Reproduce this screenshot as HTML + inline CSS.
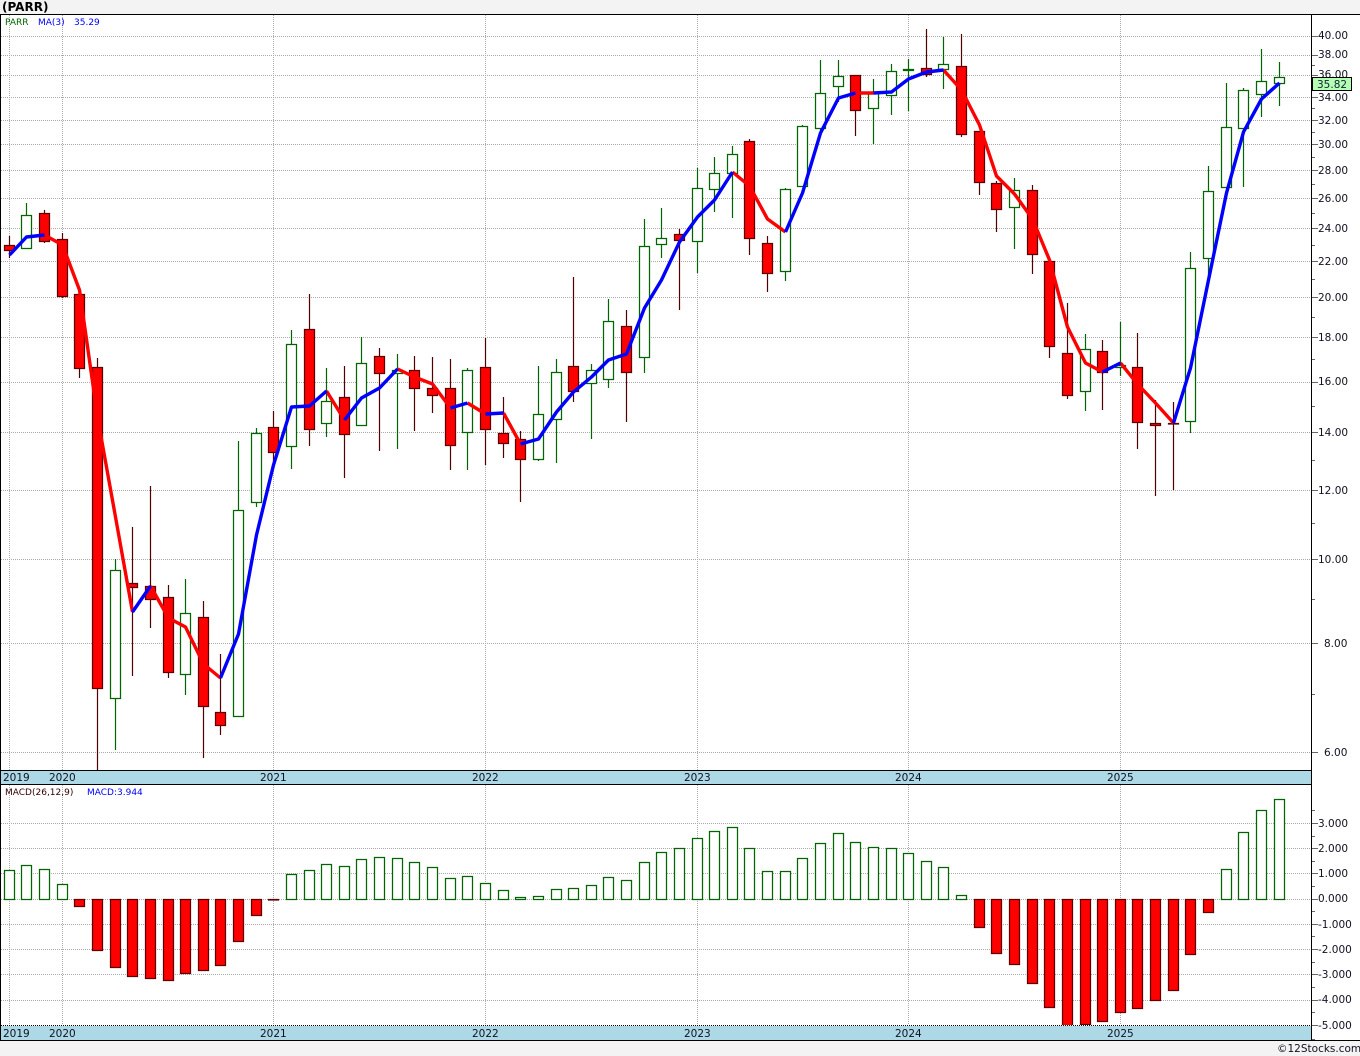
<!DOCTYPE html>
<html lang="en"><head><meta charset="utf-8"><title>PARR</title>
<style>
html,body{margin:0;padding:0;background:#f3f3f3;width:1360px;height:1056px;overflow:hidden}
svg{display:block}
text{font-family:"DejaVu Sans","Liberation Sans",sans-serif;font-size:10.5px;fill:#111122}
.g{fill:#fff;stroke:#006400;stroke-width:1.25}
.r{fill:#f00;stroke:#5f0000;stroke-width:1.25}
.c{shape-rendering:crispEdges}
</style></head><body>
<svg width="1360" height="1056" viewBox="0 0 1360 1056" xmlns="http://www.w3.org/2000/svg">
<defs>
<clipPath id="p1"><rect x="1" y="15" width="1310" height="755"/></clipPath>
<clipPath id="p2"><rect x="1" y="785" width="1310" height="240"/></clipPath>
</defs>
<rect x="0" y="0" width="1360" height="1056" fill="#f3f3f3"/>
<rect x="0" y="15" width="1360" height="1025" fill="#fff"/>

<!-- grid -->
<g class="c" fill="none" stroke="#aaa" stroke-width="1" stroke-dasharray="1 1">
<path d="M1 36.5H1311M1 55.5H1311M1 75.5H1311M1 97.5H1311M1 120.5H1311M1 144.5H1311M1 170.5H1311M1 198.5H1311M1 228.5H1311M1 261.5H1311M1 297.5H1311M1 337.5H1311M1 382.5H1311M1 432.5H1311M1 490.5H1311M1 559.5H1311M1 643.5H1311M1 752.5H1311"/>
<path d="M9.5 15V770M62.5 15V770M273.5 15V770M485.5 15V770M697.5 15V770M908.5 15V770M1120.5 15V770"/>
<path d="M1 823.5H1311M1 848.5H1311M1 873.5H1311M1 899.5H1311M1 924.5H1311M1 949.5H1311M1 974.5H1311M1 1000.5H1311"/>
<path d="M9.5 785V1025M62.5 785V1025M273.5 785V1025M485.5 785V1025M697.5 785V1025M908.5 785V1025M1120.5 785V1025"/>
</g>

<!-- candles -->
<g clip-path="url(#p1)">
<path fill="none" stroke="#006400" stroke-width="1.2" d="M26.5 203V248M115.5 559V750M185.5 579V695M238.5 441V716M256.5 428V507M291.5 330V469M326.5 368V437M361.5 337V425M397.5 354V449M467.5 368V470M538.5 366V461M556.5 359V463M591.5 364V439M608.5 299V388M644.5 219V373M661.5 208V258M697.5 168V273M714.5 157V212M732.5 146V218M785.5 188V281M802.5 125V186M820.5 60V132M838.5 60V102M873.5 79V144M891.5 64V115M908.5 59V111M943.5 37V89M1014.5 178V249M1085.5 334V411M1120.5 322V376M1190.5 252V433M1208.5 166V277M1226.5 83V187M1243.5 88V187M1261.5 49V117M1279.5 62V106"/>
<path fill="none" stroke="#500000" stroke-width="1.2" d="M9.5 236V258M44.5 210V243M62.5 233V298M79.5 291V378M97.5 358V770M132.5 527V676M150.5 486V628M168.5 585V678M203.5 601V758M220.5 654V735M273.5 411V465M309.5 294V446M344.5 366V478M379.5 348V451M414.5 356V431M432.5 357V413M450.5 359V470M485.5 338V465M503.5 397V458M520.5 431V502M573.5 277V402M626.5 310V422M679.5 229V310M749.5 139V255M767.5 236V292M855.5 75V136M926.5 29V77M961.5 34V137M979.5 131V195M996.5 181V232M1032.5 185V274M1049.5 261V358M1067.5 303V399M1102.5 340V410M1137.5 333V449M1155.5 400V496M1173.5 402V490"/>

<rect class="r" x="4.5" y="245.5" width="10" height="5"/>
<rect class="g" x="21.5" y="215.5" width="10" height="33"/>
<rect class="r" x="39.5" y="213.5" width="10" height="28"/>
<rect class="r" x="57.5" y="239.5" width="10" height="57"/>
<rect class="r" x="74.5" y="294.5" width="10" height="74"/>
<rect class="r" x="92.5" y="367.5" width="10" height="321"/>
<rect class="g" x="110.5" y="570.5" width="10" height="128"/>
<rect class="r" x="127.5" y="583.5" width="10" height="4"/>
<rect class="r" x="145.5" y="586.5" width="10" height="13"/>
<rect class="r" x="163.5" y="597.5" width="10" height="75"/>
<rect class="g" x="180.5" y="613.5" width="10" height="61"/>
<rect class="r" x="198.5" y="617.5" width="10" height="89"/>
<rect class="r" x="215.5" y="712.5" width="10" height="13"/>
<rect class="g" x="233.5" y="510.5" width="10" height="206"/>
<rect class="g" x="251.5" y="433.5" width="10" height="69"/>
<rect class="r" x="268.5" y="427.5" width="10" height="25"/>
<rect class="g" x="286.5" y="344.5" width="10" height="102"/>
<rect class="r" x="304.5" y="329.5" width="10" height="100"/>
<rect class="g" x="321.5" y="401.5" width="10" height="22"/>
<rect class="r" x="339.5" y="397.5" width="10" height="37"/>
<rect class="g" x="356.5" y="363.5" width="10" height="62"/>
<rect class="r" x="374.5" y="356.5" width="10" height="17"/>
<rect class="g" x="392.5" y="370.5" width="10" height="3"/>
<rect class="r" x="409.5" y="370.5" width="10" height="18"/>
<rect class="r" x="427.5" y="388.5" width="10" height="7"/>
<rect class="r" x="445.5" y="388.5" width="10" height="57"/>
<rect class="g" x="462.5" y="370.5" width="10" height="62"/>
<rect class="r" x="480.5" y="367.5" width="10" height="62"/>
<rect class="r" x="498.5" y="433.5" width="10" height="10"/>
<rect class="r" x="515.5" y="439.5" width="10" height="20"/>
<rect class="g" x="533.5" y="414.5" width="10" height="45"/>
<rect class="g" x="551.5" y="372.5" width="10" height="47"/>
<rect class="r" x="568.5" y="366.5" width="10" height="25"/>
<rect class="g" x="586.5" y="370.5" width="10" height="13"/>
<rect class="g" x="603.5" y="321.5" width="10" height="58"/>
<rect class="r" x="621.5" y="326.5" width="10" height="46"/>
<rect class="g" x="639.5" y="246.5" width="10" height="111"/>
<rect class="g" x="656.5" y="238.5" width="10" height="6"/>
<rect class="r" x="674.5" y="234.5" width="10" height="6"/>
<rect class="g" x="692.5" y="188.5" width="10" height="53"/>
<rect class="g" x="709.5" y="173.5" width="10" height="16"/>
<rect class="g" x="727.5" y="154.5" width="10" height="19"/>
<rect class="r" x="744.5" y="141.5" width="10" height="97"/>
<rect class="r" x="762.5" y="243.5" width="10" height="30"/>
<rect class="g" x="780.5" y="189.5" width="10" height="82"/>
<rect class="g" x="797.5" y="126.5" width="10" height="60"/>
<rect class="g" x="815.5" y="93.5" width="10" height="35"/>
<rect class="g" x="833.5" y="76.5" width="10" height="10"/>
<rect class="r" x="850.5" y="75.5" width="10" height="35"/>
<rect class="g" x="868.5" y="93.5" width="10" height="15"/>
<rect class="g" x="886.5" y="71.5" width="10" height="24"/>
<rect class="g" x="903.5" y="69.5" width="10" height="1"/>
<rect class="r" x="921.5" y="68.5" width="10" height="6"/>
<rect class="g" x="938.5" y="64.5" width="10" height="5"/>
<rect class="r" x="956.5" y="66.5" width="10" height="68"/>
<rect class="r" x="974.5" y="131.5" width="10" height="51"/>
<rect class="r" x="991.5" y="183.5" width="10" height="26"/>
<rect class="g" x="1009.5" y="190.5" width="10" height="17"/>
<rect class="r" x="1027.5" y="190.5" width="10" height="64"/>
<rect class="r" x="1044.5" y="261.5" width="10" height="85"/>
<rect class="r" x="1062.5" y="353.5" width="10" height="42"/>
<rect class="g" x="1080.5" y="349.5" width="10" height="42"/>
<rect class="r" x="1097.5" y="351.5" width="10" height="21"/>
<rect class="g" x="1115.5" y="365.5" width="10" height="2"/>
<rect class="r" x="1132.5" y="367.5" width="10" height="55"/>
<rect class="r" x="1150.5" y="423.5" width="10" height="2"/>
<rect class="r" x="1168.5" y="423.5" width="10" height="0.5"/>
<rect class="g" x="1185.5" y="268.5" width="10" height="153"/>
<rect class="g" x="1203.5" y="191.5" width="10" height="67"/>
<rect class="g" x="1221.5" y="127.5" width="10" height="60"/>
<rect class="g" x="1238.5" y="90.5" width="10" height="38"/>
<rect class="g" x="1256.5" y="81.5" width="10" height="13"/>
<rect class="g" x="1274.5" y="77.5" width="10" height="6"/>
</g>

<!-- MA(3) -->
<g fill="none" stroke-width="3.4" stroke-linejoin="round" clip-path="url(#p1)">
<path stroke="#f00" d="M44.5 235L62.5 245L79.5 290L97.5 417L115.5 517L132.5 612M150.5 586L168.5 618L185.5 627L203.5 664L220.5 678M326.5 391L344.5 420M397.5 369L414.5 377L432.5 384L450.5 408M467.5 403L485.5 414M503.5 413L520.5 444M732.5 172L749.5 186L767.5 219L785.5 232M855.5 93L873.5 93M943.5 70L961.5 90L979.5 125L996.5 176L1014.5 194L1032.5 219L1049.5 260L1067.5 327L1085.5 363L1102.5 372M1120.5 363L1137.5 384L1155.5 403L1173.5 423"/>
<path stroke="#00f" d="M9.5 255L26.5 237L44.5 235M132.5 612L150.5 586M220.5 678L238.5 634L256.5 535L273.5 465L291.5 407L309.5 406L326.5 391M344.5 420L361.5 398L379.5 388L397.5 369M450.5 408L467.5 403M485.5 414L503.5 413M520.5 444L538.5 439L556.5 412L573.5 392L591.5 377L608.5 360L626.5 354L644.5 308L661.5 280L679.5 242L697.5 217L714.5 200L732.5 172M785.5 232L802.5 193L820.5 133L838.5 98L855.5 93M873.5 93L891.5 92L908.5 79L926.5 72L943.5 70M1102.5 372L1120.5 363M1173.5 423L1190.5 368L1208.5 280L1226.5 193L1243.5 132L1261.5 99L1279.5 83"/>
</g>

<!-- MACD bars -->
<g clip-path="url(#p2)">
<rect class="g" x="4.5" y="870.5" width="10" height="29"/>
<rect class="g" x="21.5" y="865.5" width="10" height="34"/>
<rect class="g" x="39.5" y="869.5" width="10" height="30"/>
<rect class="g" x="57.5" y="884.5" width="10" height="15"/>
<rect class="r" x="74.5" y="899.5" width="10" height="7"/>
<rect class="r" x="92.5" y="899.5" width="10" height="51"/>
<rect class="r" x="110.5" y="899.5" width="10" height="68"/>
<rect class="r" x="127.5" y="899.5" width="10" height="77"/>
<rect class="r" x="145.5" y="899.5" width="10" height="79"/>
<rect class="r" x="163.5" y="899.5" width="10" height="81"/>
<rect class="r" x="180.5" y="899.5" width="10" height="74"/>
<rect class="r" x="198.5" y="899.5" width="10" height="71"/>
<rect class="r" x="215.5" y="899.5" width="10" height="66"/>
<rect class="r" x="233.5" y="899.5" width="10" height="42"/>
<rect class="r" x="251.5" y="899.5" width="10" height="16"/>
<rect class="r" x="268.5" y="899.5" width="10" height="0.5"/>
<rect class="g" x="286.5" y="874.5" width="10" height="25"/>
<rect class="g" x="304.5" y="870.5" width="10" height="29"/>
<rect class="g" x="321.5" y="864.5" width="10" height="35"/>
<rect class="g" x="339.5" y="866.5" width="10" height="33"/>
<rect class="g" x="356.5" y="859.5" width="10" height="40"/>
<rect class="g" x="374.5" y="857.5" width="10" height="42"/>
<rect class="g" x="392.5" y="858.5" width="10" height="41"/>
<rect class="g" x="409.5" y="862.5" width="10" height="37"/>
<rect class="g" x="427.5" y="867.5" width="10" height="32"/>
<rect class="g" x="445.5" y="878.5" width="10" height="21"/>
<rect class="g" x="462.5" y="876.5" width="10" height="23"/>
<rect class="g" x="480.5" y="883.5" width="10" height="16"/>
<rect class="g" x="498.5" y="890.5" width="10" height="9"/>
<rect class="g" x="515.5" y="897.5" width="10" height="2"/>
<rect class="g" x="533.5" y="896.5" width="10" height="3"/>
<rect class="g" x="551.5" y="889.5" width="10" height="10"/>
<rect class="g" x="568.5" y="888.5" width="10" height="11"/>
<rect class="g" x="586.5" y="885.5" width="10" height="14"/>
<rect class="g" x="603.5" y="877.5" width="10" height="22"/>
<rect class="g" x="621.5" y="880.5" width="10" height="19"/>
<rect class="g" x="639.5" y="862.5" width="10" height="37"/>
<rect class="g" x="656.5" y="852.5" width="10" height="47"/>
<rect class="g" x="674.5" y="848.5" width="10" height="51"/>
<rect class="g" x="692.5" y="838.5" width="10" height="61"/>
<rect class="g" x="709.5" y="831.5" width="10" height="68"/>
<rect class="g" x="727.5" y="827.5" width="10" height="72"/>
<rect class="g" x="744.5" y="848.5" width="10" height="51"/>
<rect class="g" x="762.5" y="871.5" width="10" height="28"/>
<rect class="g" x="780.5" y="871.5" width="10" height="28"/>
<rect class="g" x="797.5" y="858.5" width="10" height="41"/>
<rect class="g" x="815.5" y="843.5" width="10" height="56"/>
<rect class="g" x="833.5" y="833.5" width="10" height="66"/>
<rect class="g" x="850.5" y="842.5" width="10" height="57"/>
<rect class="g" x="868.5" y="847.5" width="10" height="52"/>
<rect class="g" x="886.5" y="848.5" width="10" height="51"/>
<rect class="g" x="903.5" y="853.5" width="10" height="46"/>
<rect class="g" x="921.5" y="861.5" width="10" height="38"/>
<rect class="g" x="938.5" y="867.5" width="10" height="32"/>
<rect class="g" x="956.5" y="895.5" width="10" height="4"/>
<rect class="r" x="974.5" y="899.5" width="10" height="28"/>
<rect class="r" x="991.5" y="899.5" width="10" height="54"/>
<rect class="r" x="1009.5" y="899.5" width="10" height="65"/>
<rect class="r" x="1027.5" y="899.5" width="10" height="84"/>
<rect class="r" x="1044.5" y="899.5" width="10" height="108"/>
<rect class="r" x="1062.5" y="899.5" width="10" height="130"/>
<rect class="r" x="1080.5" y="899.5" width="10" height="125"/>
<rect class="r" x="1097.5" y="899.5" width="10" height="122"/>
<rect class="r" x="1115.5" y="899.5" width="10" height="113"/>
<rect class="r" x="1132.5" y="899.5" width="10" height="109"/>
<rect class="r" x="1150.5" y="899.5" width="10" height="101"/>
<rect class="r" x="1168.5" y="899.5" width="10" height="91"/>
<rect class="r" x="1185.5" y="899.5" width="10" height="55"/>
<rect class="r" x="1203.5" y="899.5" width="10" height="13"/>
<rect class="g" x="1221.5" y="869.5" width="10" height="30"/>
<rect class="g" x="1238.5" y="832.5" width="10" height="67"/>
<rect class="g" x="1256.5" y="810.5" width="10" height="89"/>
<rect class="g" x="1274.5" y="799.5" width="10" height="100"/>
</g>

<!-- year bands -->
<rect x="1" y="771" width="1310" height="13" fill="#add8e6"/>
<rect x="1" y="1026" width="1310" height="14" fill="#add8e6"/>
<g class="c" fill="none" stroke="#000">
<path d="M0 14.5H1360M0 1040.5H1360M0.5 14V1041M1311.5 14V1041M0 770.5H1312M0 784.5H1312"/>
<path stroke-dasharray="1 1" d="M1 1025.5H1311"/>
</g>

<!-- axis ticks -->
<g class="c" fill="none" stroke="#666">
<path d="M1312 36.5h6M1312 55.5h6M1312 75.5h6M1312 97.5h6M1312 120.5h6M1312 144.5h6M1312 170.5h6M1312 198.5h6M1312 228.5h6M1312 261.5h6M1312 297.5h6M1312 337.5h6M1312 382.5h6M1312 432.5h6M1312 490.5h6M1312 559.5h6M1312 643.5h6M1312 752.5h6"/>
<path d="M1312 65.5h3M1312 108.5h3M1312 132.5h3M1312 157.5h3M1312 184.5h3M1312 213.5h3M1312 245.5h3M1312 279.5h3M1312 317.5h3M1312 359.5h3M1312 406.5h3M1312 460.5h3M1312 523.5h3M1312 599.5h3M1312 694.5h3"/>
<path d="M1312 823.5h6M1312 848.5h6M1312 873.5h6M1312 899.5h6M1312 924.5h6M1312 949.5h6M1312 974.5h6M1312 1000.5h6M1312 1025.5h6"/>
<path d="M1312 810.5h3M1312 836.5h3M1312 861.5h3M1312 886.5h3M1312 911.5h3M1312 936.5h3M1312 962.5h3M1312 987.5h3M1312 1012.5h3M1312 1039.5h3"/>
</g>

<!-- text -->
<text x="2" y="11" style="font-weight:bold;font-size:12px;fill:#000">(PARR)</text>
<text x="5" y="25" style="font-size:9px;fill:#006400">PARR</text>
<text x="38" y="25" style="font-size:9px;fill:#00f">MA(3)</text>
<text x="74" y="25" style="font-size:9px;fill:#00f">35.29</text>
<text x="5" y="795" style="font-size:9px;fill:#300">MACD(26,12,9)</text>
<text x="87" y="795" style="font-size:9px;fill:#00f">MACD:3.944</text>

<text x="1318" y="39">40.00</text>
<text x="1318" y="58">38.00</text>
<text x="1318" y="78">36.00</text>
<text x="1318" y="101">34.00</text>
<text x="1318" y="124">32.00</text>
<text x="1318" y="148">30.00</text>
<text x="1318" y="174">28.00</text>
<text x="1318" y="202">26.00</text>
<text x="1318" y="232">24.00</text>
<text x="1318" y="265">22.00</text>
<text x="1318" y="301">20.00</text>
<text x="1318" y="341">18.00</text>
<text x="1318" y="385">16.00</text>
<text x="1318" y="436">14.00</text>
<text x="1318" y="494">12.00</text>
<text x="1318" y="563">10.00</text>
<text x="1324" y="647">8.00</text>
<text x="1324" y="756">6.00</text>

<rect class="c" x="1312.5" y="77.5" width="39" height="13" fill="#b4ffb4" stroke="#000"/>
<text x="1317" y="88" style="fill:#123">35.82</text>

<text x="1318" y="827">3.000</text>
<text x="1318" y="852">2.000</text>
<text x="1318" y="877">1.000</text>
<text x="1318" y="902">0.000</text>
<text x="1318" y="928">-1.000</text>
<text x="1318" y="953">-2.000</text>
<text x="1318" y="978">-3.000</text>
<text x="1318" y="1003">-4.000</text>
<text x="1318" y="1029">-5.000</text>

<text x="3" y="781">2019</text>
<text x="49" y="781">2020</text>
<text x="260" y="781">2021</text>
<text x="472" y="781">2022</text>
<text x="684" y="781">2023</text>
<text x="895" y="781">2024</text>
<text x="1107" y="781">2025</text>

<text x="3" y="1037">2019</text>
<text x="49" y="1037">2020</text>
<text x="260" y="1037">2021</text>
<text x="472" y="1037">2022</text>
<text x="684" y="1037">2023</text>
<text x="895" y="1037">2024</text>
<text x="1107" y="1037">2025</text>

<text x="1277" y="1052">©12Stocks.com</text>
</svg>
</body></html>
